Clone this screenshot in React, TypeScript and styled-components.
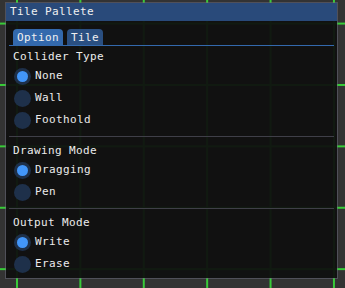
import React from "react";
import styled, { createGlobalStyle } from "styled-components";

const GlobalStyle = createGlobalStyle`
  html, body {
    margin: 0;
    padding: 0;
  }
  body {
    width: 345px;
    height: 288px;
    overflow: hidden;
    background-color: #333333;
    background-image:
      linear-gradient(to right, #38cc38 0, #38cc38 2px, transparent 2px),
      linear-gradient(to bottom, #38cc38 0, #38cc38 2px, transparent 2px);
    background-size: 63.4px 100%, 100% 61.4px;
    background-repeat: repeat-x, repeat-y;
    background-position: 16px 0, 0 22.6px;
    font-family: "DejaVu Sans Mono", "Liberation Mono", monospace;
    font-size: 11px;
    letter-spacing: 0.38px;
    color: #ececec;
  }
`;

const Page = styled.div`
  padding: 2px 0 0 5px;
`;

const Window = styled.div`
  width: 333px;
  height: 277px;
  box-sizing: border-box;
  border: 1px solid rgba(110, 110, 128, 0.5);
  display: flex;
  flex-direction: column;
  overflow: hidden;
`;

const TitleBar = styled.div`
  height: 18px;
  line-height: 18px;
  padding: 0 4px;
  background: #294a7a;
  color: #f0f0f0;
  white-space: nowrap;
`;

const Body = styled.div`
  flex: 1;
  background: rgba(15, 15, 15, 0.94);
  padding: 8px 7px;
  display: flex;
  flex-direction: column;
`;

const TabBar = styled.div`
  display: flex;
  flex-direction: column;
`;

const TabRow = styled.div`
  display: flex;
  gap: 4px;
  height: 16px;
`;

const Tab = styled.div<{ $active?: boolean }>`
  height: 16px;
  box-sizing: border-box;
  padding: 1px 4px 0;
  line-height: 15px;
  border-radius: 4px 4px 0 0;
  background: ${(p) => (p.$active ? "#3369ad" : "#2a4f81")};
  color: #f0f0f0;
`;

const TabLine = styled.div`
  height: 1px;
  margin: 0 -4px;
  background: #3369ad;
`;

const Section = styled.div<{ $first?: boolean }>`
  display: flex;
  flex-direction: column;
  gap: 4px;
  margin-top: ${(p) => (p.$first ? "4px" : "0")};
`;

const Label = styled.div`
  height: 13px;
  line-height: 13px;
`;

const Row = styled.div`
  display: flex;
  align-items: center;
  gap: 4px;
  height: 18px;
`;

const RadioBox = styled.div`
  width: 18px;
  height: 18px;
  display: grid;
  place-items: center;
`;

const RadioCircle = styled.div`
  width: 17px;
  height: 17px;
  border-radius: 50%;
  background: #1e304a;
  display: grid;
  place-items: center;
`;

const RadioDot = styled.div`
  width: 11px;
  height: 11px;
  border-radius: 50%;
  background: #4296fa;
`;

const RowText = styled.span`
  line-height: 18px;
`;

const Separator = styled.div`
  height: 1px;
  margin: 7px -4px;
  background: #3f3f48;
`;

type Group = { title: string; options: string[]; selected: number };

const groups: Group[] = [
  { title: "Collider Type", options: ["None", "Wall", "Foothold"], selected: 0 },
  { title: "Drawing Mode", options: ["Dragging", "Pen"], selected: 0 },
  { title: "Output Mode", options: ["Write", "Erase"], selected: 0 },
];

function Radio({ label, checked }: { label: string; checked: boolean }) {
  return (
    <Row>
      <RadioBox>
        <RadioCircle>{checked && <RadioDot />}</RadioCircle>
      </RadioBox>
      <RowText>{label}</RowText>
    </Row>
  );
}

export default function App() {
  return (
    <>
      <GlobalStyle />
      <Page>
        <Window>
          <TitleBar>Tile Pallete</TitleBar>
          <Body>
            <TabBar>
              <TabRow>
                <Tab $active>Option</Tab>
                <Tab>Tile</Tab>
              </TabRow>
              <TabLine />
            </TabBar>
            {groups.map((g, gi) => (
              <React.Fragment key={g.title}>
                {gi > 0 && <Separator />}
                <Section $first={gi === 0}>
                  <Label>{g.title}</Label>
                  {g.options.map((o, oi) => (
                    <Radio key={o} label={o} checked={oi === g.selected} />
                  ))}
                </Section>
              </React.Fragment>
            ))}
          </Body>
        </Window>
      </Page>
    </>
  );
}
